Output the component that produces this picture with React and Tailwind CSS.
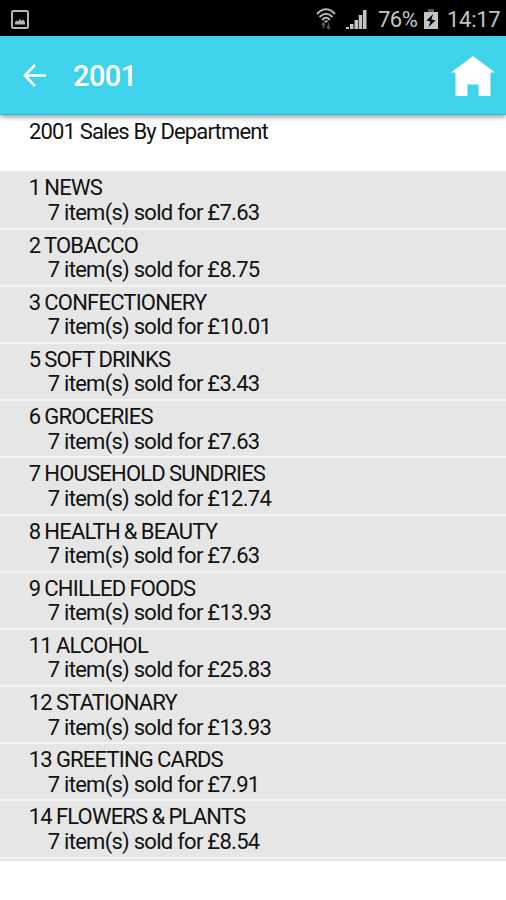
import React from "react";

const departments = [
  { id: 1, name: "NEWS", total: "7.63" },
  { id: 2, name: "TOBACCO", total: "8.75" },
  { id: 3, name: "CONFECTIONERY", total: "10.01" },
  { id: 5, name: "SOFT DRINKS", total: "3.43" },
  { id: 6, name: "GROCERIES", total: "7.63" },
  { id: 7, name: "HOUSEHOLD SUNDRIES", total: "12.74" },
  { id: 8, name: "HEALTH & BEAUTY", total: "7.63" },
  { id: 9, name: "CHILLED FOODS", total: "13.93" },
  { id: 11, name: "ALCOHOL", total: "25.83" },
  { id: 12, name: "STATIONARY", total: "13.93" },
  { id: 13, name: "GREETING CARDS", total: "7.91" },
  { id: 14, name: "FLOWERS & PLANTS", total: "8.54" },
];

const PictureIcon = () => (
  <svg className="w-[18px] h-[19px]" viewBox="0 0 18 19" fill="none">
    <rect x="1" y="1" width="16" height="17" rx="1.5" stroke="#b5b5b5" strokeWidth="2" />
    <path d="M4 14.500v-2.500l1.500-1.500 1.500 1 2-2.500 1.500 2 1.500-1.500 2 2.500v2.500z" fill="#b5b5b5" />
  </svg>
);

const WifiIcon = () => (
  <svg className="w-5 h-[22px]" viewBox="0 0 20 22" fill="none">
    <path d="M1 6Q10-3.500 19 6M3.500 9Q10 2.500 16.500 9M6 11.800Q10 7.800 14 11.800" stroke="#b5b5b5" strokeWidth="1.900" />
    <path d="M7.500 12.500h5L10 15z" fill="#b5b5b5" />
    <path d="M7.500 20.500v-5M5.800 17l1.700-2 1.700 2M12.500 15v5M10.800 18.500l1.700 2 1.700-2" stroke="#555" strokeWidth="1.500" />
  </svg>
);

const SignalIcon = () => (
  <svg className="w-[21px] h-[19px]" viewBox="0 0 21 19" fill="#c4c4c4">
    <path d="M0 17h3v2H0zM4 14h3.500v5H4zM8.500 10H12v9H8.500zM12.700 5h3.500v14h-3.500zM17 0h3.500v19H17z" />
  </svg>
);

const BatteryIcon = () => (
  <svg className="w-[14px] h-[20px]" viewBox="0 0 14 20">
    <path d="M4 0h6v3H4z" fill="#555" />
    <path d="M0 3h14v17H0z" fill="#c4c4c4" />
    <path d="M9 5L2.500 11.500l4 1L4.500 18l7-6.500-4-1z" fill="#000" />
  </svg>
);

const StatusBar = () => (
  <div className="flex h-9 items-center bg-black pl-[11px] pr-[5px] pt-[2px] text-[#c4c4c4]">
    <PictureIcon />
    <div className="ml-auto flex items-center">
      <span className="-mt-px flex"><WifiIcon /></span>
      <span className="ml-[10px] flex"><SignalIcon /></span>
      <span className="ml-[11px] w-[41px] whitespace-nowrap pt-[2px] text-[22px] leading-8 tracking-[-0.5px]">76%</span>
      <span className="ml-[5px] flex"><BatteryIcon /></span>
      <span className="ml-[9px] w-[54px] whitespace-nowrap pt-[2px] text-[22px] leading-8 tracking-[-0.3px]">14:17</span>
    </div>
  </div>
);

const AppBar = () => (
  <header className="relative flex h-[79px] items-center border-b border-[#25bfe0] bg-[#3fd2eb] pl-[23px] pr-[11px] text-white shadow-[0_2px_5px_rgba(0,0,0,0.4)]">
    <svg className="w-[23px] h-[23px]" viewBox="0 0 23 23" fill="none" stroke="#fff" strokeWidth="2.600">
      <path d="M23 11.500H2M12 1L1.800 11.500 12 22" />
    </svg>
    <h1 className="ml-[27px] pt-[3px] text-[29px] font-medium leading-none tracking-[-0.6px]">2001</h1>
    <svg className="ml-auto mt-px w-[44px] h-[40px]" viewBox="0 0 44 40" fill="#fff">
      <path d="M22 0L44 16.500H39.500V40H27.500V28.500H16.500V40H4.500V16.500H0z" />
    </svg>
  </header>
);

export default function App() {
  return (
    <div className="h-[900px] w-full overflow-hidden bg-white font-['Roboto',sans-serif] text-[#111]">
      <StatusBar />
      <AppBar />
      <h2 className="h-14 pl-[29px] pt-[5px] text-[22px] leading-6 tracking-[-0.85px]">
        2001 Sales By Department
      </h2>
      <ul className="border-b-2 border-[#e4e4e4] bg-[#e6e6e6] pt-[1.4px]">
        {departments.map((dept) => (
          <li
            key={dept.id}
            className="h-[57.2px] border-b-2 border-[#f3f3f3] pt-1 text-[22px] leading-[24.5px]"
          >
            <p className="pl-[28.7px] tracking-[-0.8px] [word-spacing:-0.6px]">
              {dept.id} {dept.name}
            </p>
            <p className="pl-[47.7px] tracking-[-0.73px]">7 item(s) sold for £{dept.total}</p>
          </li>
        ))}
      </ul>
    </div>
  );
}
